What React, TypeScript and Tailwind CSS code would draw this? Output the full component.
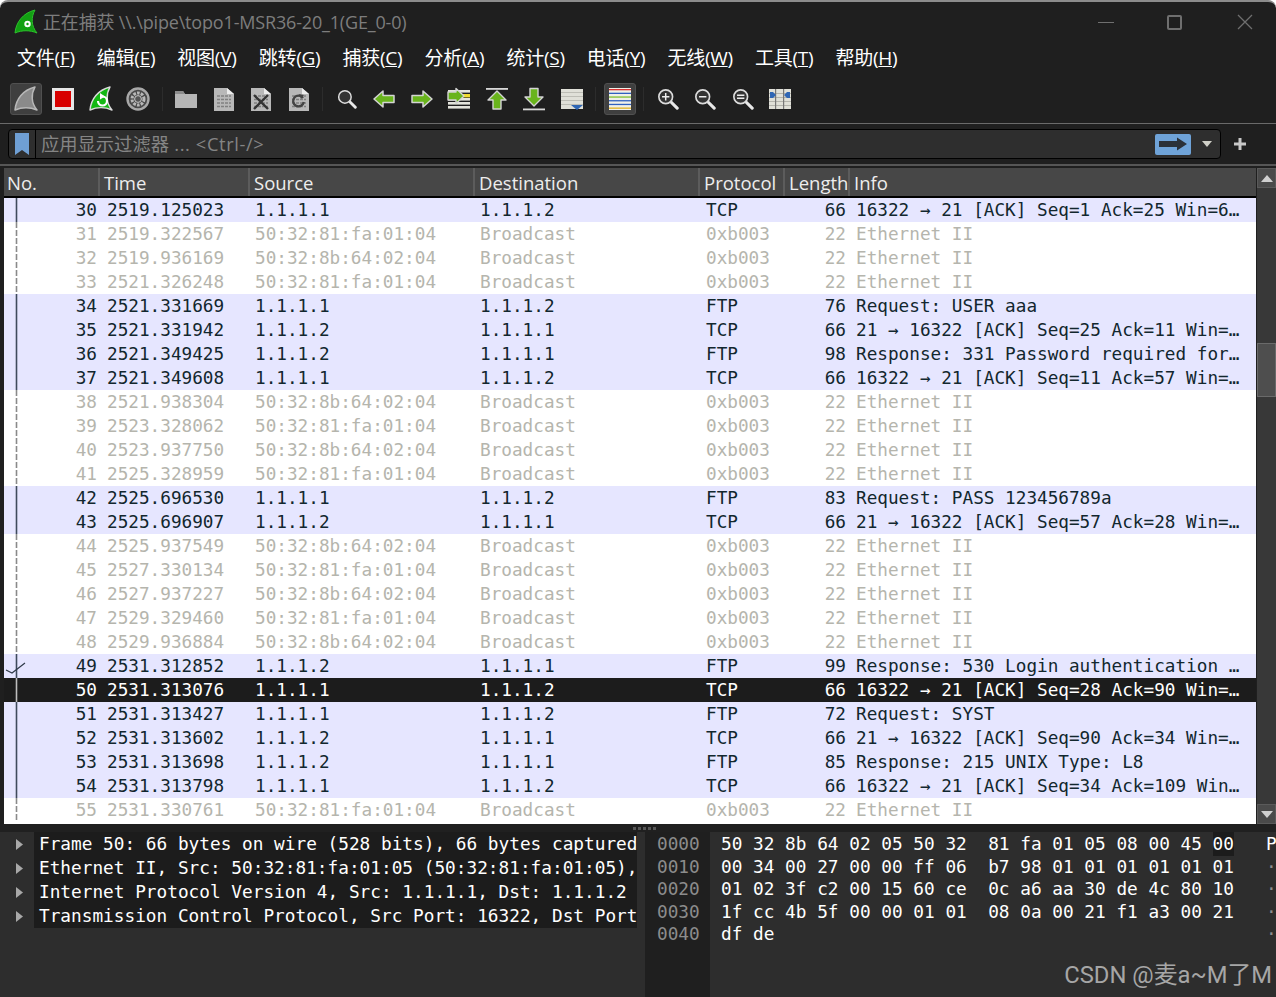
import React from "react";

const UI = "font-['Open_Sans','Noto_Sans_CJK_SC',sans-serif]";
const MONO = "font-['DejaVu_Sans_Mono',monospace]";

type Row = [number, string, string, string, string, string, string];
const bm = (no: number, time: string, mac: string): Row => [no, time, mac, "Broadcast", "0xb003", "22", "Ethernet II"];
const A = "1.1.1.1";
const B = "1.1.1.2";
const M1 = "50:32:81:fa:01:04";
const M2 = "50:32:8b:64:02:04";
const rows: Row[] = [
  [30, "2519.125023", A, B, "TCP", "66", "16322 → 21 [ACK] Seq=1 Ack=25 Win=6…"],
  bm(31, "2519.322567", M1),
  bm(32, "2519.936169", M2),
  bm(33, "2521.326248", M1),
  [34, "2521.331669", A, B, "FTP", "76", "Request: USER aaa"],
  [35, "2521.331942", B, A, "TCP", "66", "21 → 16322 [ACK] Seq=25 Ack=11 Win=…"],
  [36, "2521.349425", B, A, "FTP", "98", "Response: 331 Password required for…"],
  [37, "2521.349608", A, B, "TCP", "66", "16322 → 21 [ACK] Seq=11 Ack=57 Win=…"],
  bm(38, "2521.938304", M2),
  bm(39, "2523.328062", M1),
  bm(40, "2523.937750", M2),
  bm(41, "2525.328959", M1),
  [42, "2525.696530", A, B, "FTP", "83", "Request: PASS 123456789a"],
  [43, "2525.696907", B, A, "TCP", "66", "21 → 16322 [ACK] Seq=57 Ack=28 Win=…"],
  bm(44, "2525.937549", M2),
  bm(45, "2527.330134", M1),
  bm(46, "2527.937227", M2),
  bm(47, "2529.329460", M1),
  bm(48, "2529.936884", M2),
  [49, "2531.312852", B, A, "FTP", "99", "Response: 530 Login authentication …"],
  [50, "2531.313076", A, B, "TCP", "66", "16322 → 21 [ACK] Seq=28 Ack=90 Win=…"],
  [51, "2531.313427", A, B, "FTP", "72", "Request: SYST"],
  [52, "2531.313602", B, A, "TCP", "66", "21 → 16322 [ACK] Seq=90 Ack=34 Win=…"],
  [53, "2531.313698", B, A, "FTP", "85", "Response: 215 UNIX Type: L8"],
  [54, "2531.313798", A, B, "TCP", "66", "16322 → 21 [ACK] Seq=34 Ack=109 Win…"],
  bm(55, "2531.330761", M1),
];

const menus: [string, string][] = [
  ["文件", "F"], ["编辑", "E"], ["视图", "V"], ["跳转", "G"], ["捕获", "C"], ["分析", "A"],
  ["统计", "S"], ["电话", "Y"], ["无线", "W"], ["工具", "T"], ["帮助", "H"],
];

const fin = "M2 24 C3 13 10 4 22 1 C18 8 18 17 24 24 C17 21 9 21 2 24 Z";

function Fin({ fill, stroke, size = 26 }: { fill: string; stroke: string; size?: number }) {
  return (
    <svg width={size} height={size} viewBox="0 0 26 26">
      <path d={fin} fill={fill} stroke={stroke} strokeWidth="1.5" strokeLinejoin="round" />
    </svg>
  );
}

function Doc({ children }: { children?: React.ReactNode }) {
  return (
    <svg width="20" height="24" viewBox="0 0 20 24">
      <path d="M0 1 H13 L20 7 V24 H0 Z" fill="#b8b8b8" />
      <path d="M13 1 V7 H20 Z" fill="#ececec" />
      <g stroke="#808080" strokeWidth="1.5" strokeDasharray="3 1">
        <path d="M3 9 H17" />
        <path d="M3 12.5 H17" />
        <path d="M3 16 H17" />
        <path d="M3 19.5 H17" />
      </g>
      {children}
    </svg>
  );
}

function Arrow({ rot = 0 }: { rot?: number }) {
  return (
    <svg width="22" height="18" viewBox="0 0 22 18">
      <g transform={`rotate(${rot} 11 9)`}>
        <path d="M1 9 L10 1 V5.5 H21 V12.5 H10 V17 Z" fill="#69b41c" stroke="#d4d4d4" strokeWidth="1.5" strokeLinejoin="round" />
      </g>
    </svg>
  );
}

function Lens({ mark, size = 22 }: { mark?: "plus" | "minus" | "eq"; size?: number }) {
  return (
    <svg width={size} height={size} viewBox="0 0 24 24">
      <path d="M15 15 L22 22" stroke="#e8e8e8" strokeWidth="3.4" strokeLinecap="round" />
      <circle cx="9.5" cy="9.5" r="7.5" fill="#333" stroke="#dcdcdc" strokeWidth="1.8" />
      {mark && <path d="M5.5 9.5 H13.5" stroke="#eee" strokeWidth="1.6" transform={mark === "eq" ? "translate(0 -1.6)" : undefined} />}
      {mark === "plus" && <path d="M9.5 5.5 V13.5" stroke="#eee" strokeWidth="1.6" />}
      {mark === "eq" && <path d="M5.5 11.1 H13.5" stroke="#eee" strokeWidth="1.6" />}
    </svg>
  );
}

function Lines() {
  return (
    <g fill="#e4e4dc">
      {[0, 1, 2, 3, 4].map((i) => <rect key={i} x="1" y={3 + i * 4} width="22" height="2.6" />)}
    </g>
  );
}

const tools: (React.ReactNode | null)[] = [
  <div className="w-[32px] h-[32px] flex items-center justify-center bg-[#3f3f3f] border border-[#505050] rounded-[3px]"><Fin fill="#8a8a8a" stroke="#b8b8b8" /></div>,
  <div className="w-[22px] h-[22px] bg-[#d80000] border-[3px] border-[#e6e6e6]" />,
  <svg width="26" height="26" viewBox="0 0 26 26">
    <path d={fin} fill="#14b814" stroke="#dcdcdc" strokeWidth="1.4" strokeLinejoin="round" />
    <path d="M10 15 a4.5 4.5 0 1 0 4.5 -4.5" fill="none" stroke="#fff" strokeWidth="2.2" />
    <path d="M12 7 L17 10.5 L12 13.5 Z" fill="#fff" />
  </svg>,
  <svg width="24" height="24" viewBox="0 0 24 24">
    <circle cx="12" cy="12" r="10.5" fill="#4a4a4a" stroke="#a8a8a8" strokeWidth="2.4" />
    <circle cx="12" cy="12" r="6" fill="none" stroke="#b8b8b8" strokeWidth="3" strokeDasharray="2.6 1.2" />
    <circle cx="12" cy="12" r="3.4" fill="#555" stroke="#c8c8c8" strokeWidth="1" />
  </svg>,
  null,
  <svg width="24" height="20" viewBox="0 0 24 20">
    <path d="M1 2 H9 L11 5 H23 V19 H1 Z" fill="#b6b6b6" />
    <path d="M1 2 H9 L11 5 H1 Z" fill="#8c8c8c" />
  </svg>,
  <Doc />,
  <Doc><path d="M3 8 L17 22 M17 8 L3 22" stroke="#333" strokeWidth="2.4" /></Doc>,
  <Doc><path d="M14 11 a5.4 5.4 0 1 0 0.8 4" fill="none" stroke="#444" strokeWidth="2.4" /><path d="M10 7 L15 8 L12 12 Z" fill="#444" /></Doc>,
  null,
  <Lens size={20} />,
  <Arrow />,
  <Arrow rot={180} />,
  <svg width="24" height="24" viewBox="0 0 24 24">
    <Lines />
    <rect x="16" y="7" width="7" height="3.4" fill="#f2dc30" />
    <path d="M17 9 L9 1.5 V5 H1 V13 H9 V16.5 Z" fill="#69b41c" stroke="#d4d4d4" strokeWidth="1.4" strokeLinejoin="round" />
  </svg>,
  <svg width="24" height="24" viewBox="0 0 24 24">
    <rect x="1" y="1" width="22" height="1.8" fill="#d8d8d8" />
    <path d="M12 4 L21 13 H16 V22 H8 V13 H3 Z" fill="#69b41c" stroke="#d4d4d4" strokeWidth="1.4" strokeLinejoin="round" />
  </svg>,
  <svg width="24" height="24" viewBox="0 0 24 24">
    <rect x="1" y="21.5" width="22" height="1.8" fill="#d8d8d8" />
    <path d="M12 19 L21 10 H16 V1.5 H8 V10 H3 Z" fill="#69b41c" stroke="#d4d4d4" strokeWidth="1.4" strokeLinejoin="round" />
  </svg>,
  <svg width="24" height="24" viewBox="0 0 24 24">
    <rect x="1" y="2" width="22" height="20" fill="#e0e0d8" />
    <g fill="#bdbdb5">
      {[0, 1, 2, 3].map((i) => <rect key={i} x="1" y={5 + i * 4} width="22" height="1" />)}
    </g>
    <path d="M11 18 H23 L17 23 Z" fill="#2f66b4" />
  </svg>,
  null,
  <div className="w-[32px] h-[32px] flex items-center justify-center bg-[#3f3f3f] border border-[#505050] rounded-[3px]">
    <svg width="24" height="24" viewBox="0 0 24 24">
      <rect x="1" y="1" width="22" height="22" fill="#f0f0e8" />
      {["#d83030", "#3060c0", "#80c030", "#3060c0", "#3060c0", "#e0b020"].map((c, i) => (
        <rect key={i} x="1" y={2 + i * 3.7} width="22" height="1.3" fill={c} />
      ))}
    </svg>
  </div>,
  null,
  <Lens mark="plus" />,
  <Lens mark="minus" />,
  <Lens mark="eq" />,
  <svg width="24" height="24" viewBox="0 0 24 24">
    <rect x="1" y="2" width="22" height="20" fill="#e0e0d8" />
    <g fill="#b4b4ac">
      {[0, 1, 2, 3].map((i) => <rect key={i} x="1" y={6 + i * 4} width="22" height="1" />)}
    </g>
    <rect x="7" y="2" width="1.2" height="20" fill="#777" />
    <rect x="15" y="2" width="1.2" height="20" fill="#777" />
    <path d="M2 5 H5 V5 L8 8 L5 11 H2 Z M22 5 H19 L16 8 L19 11 H22 Z" fill="#2f66b4" />
  </svg>,
];

const cols = ["w-[96px]", "w-[148px]", "w-[225px]", "w-[225px]", "w-[85px]", "w-[67px]"];

function Gutter({ no, kind }: { no: number; kind: "sel" | "on" | "dim" }) {
  const stroke = kind === "sel" ? "#bdbdbd" : kind === "on" ? "#3f4a5c" : "#8a8a8a";
  return (
    <svg className="absolute left-0 top-0" width="30" height="24" viewBox="0 0 30 24">
      <path d="M12.5 0 V24" stroke={stroke} strokeWidth="1.6" strokeDasharray={kind === "dim" ? "6 2" : undefined} />
      {no === 49 && <path d="M2 16 L8 19 L21 9" fill="none" stroke="#2f3a48" strokeWidth="1.2" />}
    </svg>
  );
}

function PacketRow({ r }: { r: Row }) {
  const [no, time, src, dst, proto, len, info] = r;
  const dim = dst === "Broadcast";
  const sel = no === 50;
  const kind = sel ? "sel" : dim ? "dim" : "on";
  const tone = sel
    ? "bg-[#1c1c1c] text-white"
    : dim
    ? "bg-white text-[#b5b5ad]"
    : "bg-[#e6e6ff] text-[#12272e]";
  return (
    <div className={`relative flex h-[24px] leading-[24px] whitespace-pre ${tone}`}>
      <Gutter no={no} kind={kind} />
      <div className={`${cols[0]} text-right pr-[3px]`}>{no}</div>
      <div className={`${cols[1]} pl-[7px]`}>{time}</div>
      <div className={`${cols[2]} pl-[7px]`}>{src}</div>
      <div className={`${cols[3]} pl-[7px]`}>{dst}</div>
      <div className={`${cols[4]} pl-[8px]`}>{proto}</div>
      <div className={`${cols[5]} text-right pr-[4px]`}>{len}</div>
      <div className="pl-[6px] flex-1 overflow-hidden">{info}</div>
    </div>
  );
}

const hex: [string, string, string, string][] = [
  ["0000", "50 32 8b 64 02 05 50 32", "81 fa 01 05 08 00 45 ", "P"],
  ["0010", "00 34 00 27 00 00 ff 06", "b7 98 01 01 01 01 01 01", "·"],
  ["0020", "01 02 3f c2 00 15 60 ce", "0c a6 aa 30 de 4c 80 10", "·"],
  ["0030", "1f cc 4b 5f 00 00 01 01", "08 0a 00 21 f1 a3 00 21", "·"],
  ["0040", "df de", "", "·"],
];

const details = [
  "Frame 50: 66 bytes on wire (528 bits), 66 bytes captured",
  "Ethernet II, Src: 50:32:81:fa:01:05 (50:32:81:fa:01:05),",
  "Internet Protocol Version 4, Src: 1.1.1.1, Dst: 1.1.1.2",
  "Transmission Control Protocol, Src Port: 16322, Dst Port",
];

function ScrollBtn({ up }: { up: boolean }) {
  return (
    <div className="h-[20px] bg-[#4a4a4a] border border-[#5a5a5a] flex items-center justify-center shrink-0">
      <svg width="12" height="7" viewBox="0 0 12 7">
        <path d={up ? "M0 7 L6 0 L12 7 Z" : "M0 0 L6 7 L12 0 Z"} fill="#d0d0d0" />
      </svg>
    </div>
  );
}

export default function App() {
  return (
    <div className={`relative w-[1276px] h-[997px] overflow-hidden bg-[#1f1f1f] flex flex-col border-t-2 border-[#8c8c8c] rounded-t-[8px] ${UI}`}>
      {/* title bar */}
      <div className="h-[40px] flex items-center pl-[13px] shrink-0">
        <svg width="26" height="26" viewBox="0 0 26 26">
          <path d={fin} fill="#12a012" stroke="#2cc02c" strokeWidth="1" strokeLinejoin="round" />
          <circle cx="14.5" cy="15" r="3.2" fill="#fff" />
          <circle cx="14.5" cy="15" r="1.2" fill="#12a012" />
        </svg>
        <span className="ml-[4px] text-[18px] tracking-[-0.17px] text-[#7d7d7d] whitespace-pre">正在捕获 \\.\pipe\topo1-MSR36-20_1(GE_0-0)</span>
        <div className="ml-auto flex items-center text-[#6f6f6f]">
          <div className="w-[16px] h-px bg-[#6f6f6f] mr-[53px]" />
          <div className="w-[15px] h-[15px] border-2 border-[#6f6f6f] rounded-[2px] mr-[55px]" />
          <svg className="mr-[23px]" width="16" height="16" viewBox="0 0 16 16">
            <path d="M1 1 L15 15 M15 1 L1 15" stroke="#6f6f6f" strokeWidth="1.3" />
          </svg>
        </div>
      </div>

      {/* menu bar */}
      <div className="h-[33px] flex items-center gap-[22px] pl-[17px] text-[19px] tracking-[-0.25px] text-white shrink-0">
        {menus.map(([n, k]) => (
          <span key={k} className="whitespace-pre">
            {n}(<span className="underline">{k}</span>)
          </span>
        ))}
      </div>

      {/* tool bar */}
      <div className="h-[49px] flex items-center pl-[7px] shrink-0 border-b border-[#6a6a6a]">
        {tools.map((t, i) =>
          t === null ? (
            <div key={i} className="w-[10.5px] flex justify-center">
              <div className="w-px h-[24px] bg-[#2c2c2c]" />
            </div>
          ) : (
            <div key={i} className="w-[37.5px] flex items-center justify-center">{t}</div>
          )
        )}
      </div>

      {/* filter */}
      <div className="h-[42px] flex items-center pl-[8px] shrink-0 border-b-2 border-[#565656]">
        <div className="w-[1213px] h-[30px] flex items-center bg-[#2e2e2e] border border-black rounded-[4px]">
          <div className="w-[27px] h-full flex items-center justify-center border-r border-black shrink-0">
            <svg width="14" height="22" viewBox="0 0 14 22">
              <path d="M0 0 H14 V22 L7 17 L0 22 Z" fill="#6f9fd4" />
            </svg>
          </div>
          <span className="ml-[5px] text-[18.3px] text-[#858585] whitespace-pre">
            应用显示过滤器<span className="tracking-[0.6px]"> ... &lt;Ctrl-/&gt;</span>
          </span>
          <div className="ml-auto w-[36px] h-[21px] bg-[#6fa3d8] rounded-[2px] flex items-center justify-center">
            <svg width="30" height="14" viewBox="0 0 30 14">
              <path d="M1 4 H19 V0.5 L29 7 L19 13.5 V10 H1 Z" fill="#2b3138" />
            </svg>
          </div>
          <svg className="ml-[10px] mr-[7px]" width="12" height="7" viewBox="0 0 12 7">
            <path d="M1 0 L6 6 L11 0 Z" fill="#d0d0c8" />
          </svg>
        </div>
        <svg className="ml-[12px]" width="14" height="14" viewBox="0 0 14 14">
          <path d="M7 1 V13 M1 7 H13" stroke="#c8c8c8" strokeWidth="3" />
        </svg>
      </div>

      {/* packet list */}
      <div className="h-[658px] pt-[2px] pl-[4px] flex shrink-0">
        <div className="w-[1252px] bg-white overflow-hidden">
          <div className="flex h-[30px] bg-[#474747] border-b-2 border-black text-[18.5px] text-[#ededed] leading-[29px] whitespace-pre">
            <div className="w-[94px] pl-[3px]">No.</div>
            <div className="w-[150px] pl-[4px] border-l-2 border-[#5c5c5c]">Time</div>
            <div className={`${cols[2]} pl-[4px] border-l-2 border-[#5c5c5c]`}>Source</div>
            <div className={`${cols[3]} pl-[4px] border-l-2 border-[#5c5c5c]`}>Destination</div>
            <div className={`${cols[4]} pl-[4px] border-l-2 border-[#5c5c5c]`}>Protocol</div>
            <div className="w-[65px] pl-[4px] border-l-2 border-[#5c5c5c]">Length</div>
            <div className="pl-[4px] border-l-2 border-[#5c5c5c] flex-1">Info</div>
          </div>
          <div className={`${MONO} text-[17.7px]`}>
            {rows.map((r) => <PacketRow key={r[0]} r={r} />)}
          </div>
        </div>
        <div className="ml-px w-[19px] bg-[#383838] flex flex-col">
          <ScrollBtn up />
          <div className="flex-1 pt-[155px]">
            <div className="h-[54px] bg-[#4e4e4e] border border-[#6a6a6a]" />
          </div>
          <ScrollBtn up={false} />
        </div>
      </div>

      {/* splitter */}
      <div className="h-[8px] flex items-center justify-center pl-[12px] gap-[2px] shrink-0 bg-[#202020]">
        {[0, 1, 2, 3, 4].map((i) => <div key={i} className="w-[3px] h-[3px] bg-[#585858]" />)}
      </div>

      {/* lower panes */}
      <div className={`flex-1 flex pl-[4px] bg-[#2d2d2d] text-[17.75px] whitespace-pre ${MONO}`}>
        <div className="w-[633px] flex shrink-0 overflow-hidden">
          <div className="w-[30px] shrink-0 flex flex-col">
            {details.map((_, i) => (
              <div key={i} className="h-[24px] flex items-center pl-[12px]">
                <svg width="7" height="11" viewBox="0 0 7 11"><path d="M0 0 L7 5.5 L0 11 Z" fill="#a8a8a8" /></svg>
              </div>
            ))}
          </div>
          <div className="flex-1 self-start bg-[#1c1c1c] pl-[5px] text-white overflow-hidden">
            {details.map((d) => <div key={d} className="h-[24px] leading-[24px]">{d}</div>)}
          </div>
        </div>
        <div className="w-[8px] shrink-0" />
        <div className="w-[65px] shrink-0 bg-[#1f1f1f] pl-[12px] text-[#8c8c8c]">
          {hex.map((h) => <div key={h[0]} className="h-[22.5px] leading-[24px]">{h[0]}</div>)}
        </div>
        <div className="flex-1 pl-[11px] text-white overflow-hidden">
          {hex.map((h, i) => (
            <div key={h[0]} className="h-[22.5px] leading-[24px]">
              {h[1]}  {h[2]}
              {i === 0 && <span className="bg-[#1c1c1c] inline-block leading-[24px] w-[21.4px]">00</span>}
              {h[2] === "" ? " ".repeat(41) : ""}
              <span className={i === 0 ? "text-white" : "text-[#8c8c8c]"}>{"   "}{h[3]}</span>
            </div>
          ))}
        </div>
      </div>

      <div className="absolute right-[4px] bottom-[7px] text-[23.8px] leading-[30px] text-[#a6a6a6] whitespace-pre font-['Roboto','Noto_Sans_CJK_SC',sans-serif]">
        CSDN @麦a~M了M
      </div>
    </div>
  );
}
